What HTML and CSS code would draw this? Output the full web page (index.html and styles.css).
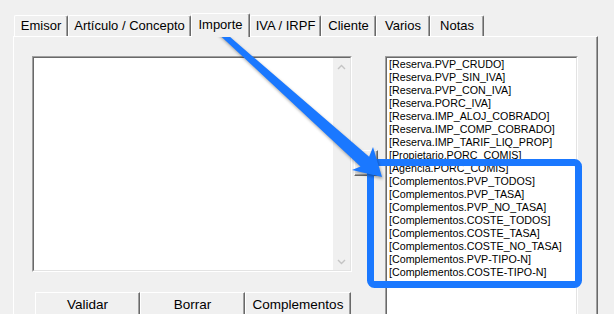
FILE: index.html
```html
<!DOCTYPE html>
<html>
<head>
<meta charset="utf-8">
<link rel="stylesheet" href="styles.css">
</head>
<body>
<div class="window">
  <div class="tabs">
    <div class="tab w-emisor">Emisor</div>
    <div class="tab w-articulo">Artículo / Concepto</div>
    <div class="tab tab-active w-importe">Importe</div>
    <div class="tab w-iva">IVA / IRPF</div>
    <div class="tab w-cliente">Cliente</div>
    <div class="tab w-varios">Varios</div>
    <div class="tab w-notas">Notas</div>
  </div>
  <div class="panel">
    <div class="left-col">
      <div class="memo">
        <div class="memo-inner">
          <div class="memo-text"></div>
          <div class="vscroll">
            <div class="sb-btn">
              <svg class="chev" width="9" height="6" viewBox="0 0 9 6"><polyline points="1,5 4.5,1.5 8,5" fill="none" stroke="#c4c4c4" stroke-width="1.4"/></svg>
            </div>
            <div class="sb-btn">
              <svg class="chev" width="9" height="6" viewBox="0 0 9 6"><polyline points="1,1 4.5,4.5 8,1" fill="none" stroke="#c4c4c4" stroke-width="1.4"/></svg>
            </div>
          </div>
        </div>
      </div>
      <div class="buttons">
        <div class="btn b-validar">Validar</div>
        <div class="btn b-borrar">Borrar</div>
        <div class="btn b-compl">Complementos</div>
      </div>
    </div>
    <div class="mid">
      <div class="small-btn"></div>
    </div>
    <div class="list">
      <div class="list-inner">
        <div class="item">[Reserva.PVP_CRUDO]</div>
        <div class="item">[Reserva.PVP_SIN_IVA]</div>
        <div class="item">[Reserva.PVP_CON_IVA]</div>
        <div class="item">[Reserva.PORC_IVA]</div>
        <div class="item">[Reserva.IMP_ALOJ_COBRADO]</div>
        <div class="item">[Reserva.IMP_COMP_COBRADO]</div>
        <div class="item">[Reserva.IMP_TARIF_LIQ_PROP]</div>
        <div class="item">[Propietario.PORC_COMIS]</div>
        <div class="item">[Agencia.PORC_COMIS]</div>
        <div class="item">[Complementos.PVP_TODOS]</div>
        <div class="item">[Complementos.PVP_TASA]</div>
        <div class="item">[Complementos.PVP_NO_TASA]</div>
        <div class="item">[Complementos.COSTE_TODOS]</div>
        <div class="item">[Complementos.COSTE_TASA]</div>
        <div class="item">[Complementos.COSTE_NO_TASA]</div>
        <div class="item">[Complementos.PVP-TIPO-N]</div>
        <div class="item">[Complementos.COSTE-TIPO-N]</div>
      </div>
    </div>
  </div>
</div>
<svg class="annot" width="614" height="314" viewBox="0 0 614 314">
  <rect x="370.5" y="162.5" width="208" height="122" rx="4" fill="none" stroke="#1a78ff" stroke-width="7"/>
  <polygon class="arrow" points="216.3,31.9 219.7,28.1 369.1,156.8 373,147 382,177 352,170 360.5,166.4" fill="#1a78ff"/>
</svg>
</body>
</html>
```

FILE: styles.css
```css
html, body {
  margin: 0;
  padding: 0;
}
body {
  background: #f0f0f0;
  font-family: "Liberation Sans", Arial, sans-serif;
  color: #000;
  width: 614px;
  height: 314px;
  overflow: hidden;
  position: relative;
}
.window {
  padding: 13px 0 0 13px;
}
.tabs {
  display: flex;
  align-items: flex-start;
  height: 23px;
  padding-left: 1px;
}
.tab {
  box-sizing: border-box;
  height: 21px;
  margin-top: 2px;
  border-top: 1px solid #fff;
  border-left: 1px solid #fff;
  border-right: 1px solid #696969;
  box-shadow: inset -1px 0 #a0a0a0;
  border-radius: 2px 2px 0 0;
  font-size: 13px;
  line-height: 19px;
  text-align: center;
  white-space: nowrap;
  background: #f0f0f0;
}
.tab-active {
  height: 24px;
  margin-top: 0;
  line-height: 22px;
  position: relative;
  z-index: 2;
}
.w-emisor { width: 54px; }
.w-articulo { width: 123px; }
.w-importe { width: 59px; }
.w-iva { width: 71px; }
.w-cliente { width: 55px; }
.w-varios { width: 54px; }
.w-notas { width: 54px; }

.panel {
  box-sizing: border-box;
  width: 585px;
  height: 278px;
  overflow: hidden;
  border-top: 1px solid #fff;
  border-left: 1px solid #fff;
  border-right: 1px solid #696969;
  box-shadow: inset -1px 0 #a0a0a0;
  display: flex;
  align-items: flex-start;
  padding: 19px 0 0 18px;
}
.left-col {
  width: 320px;
  display: flex;
  flex-direction: column;
}
.memo {
  box-sizing: border-box;
  height: 216px;
  border-top: 1px solid #a0a0a0;
  border-left: 1px solid #a0a0a0;
  border-right: 1px solid #fff;
  border-bottom: 1px solid #fff;
}
.memo-inner {
  box-sizing: border-box;
  height: 100%;
  border-top: 1px solid #696969;
  border-left: 1px solid #696969;
  border-right: 1px solid #e3e3e3;
  border-bottom: 1px solid #e3e3e3;
  display: flex;
  background: #fff;
}
.memo-text {
  flex: 1;
}
.vscroll {
  width: 17px;
  background: #f0f0f0;
  display: flex;
  flex-direction: column;
  justify-content: space-between;
}
.sb-btn {
  height: 17px;
  display: flex;
  align-items: center;
  justify-content: center;
}
.chev {
  display: block;
}
.buttons {
  display: flex;
  margin: 20px 0 0 3px;
}
.btn {
  box-sizing: border-box;
  height: 25px;
  border-top: 1px solid #fff;
  border-left: 1px solid #fff;
  border-right: 1px solid #696969;
  border-bottom: 1px solid #696969;
  box-shadow: inset -1px -1px #a0a0a0;
  font-size: 13.5px;
  line-height: 23px;
  text-align: center;
  white-space: nowrap;
}
.b-validar { width: 105px; }
.b-borrar { width: 105px; }
.b-compl { width: 106px; }

.mid {
  width: 33px;
  box-sizing: border-box;
  padding: 94px 0 0 2px;
}
.small-btn {
  box-sizing: border-box;
  width: 24px;
  height: 26px;
  border-top: 1px solid #fff;
  border-left: 1px solid #fff;
  border-right: 1px solid #696969;
  border-bottom: 1px solid #696969;
  box-shadow: inset -1px -1px #a0a0a0;
}
.list {
  box-sizing: border-box;
  width: 193px;
  height: 270px;
  border-top: 1px solid #a0a0a0;
  border-left: 1px solid #a0a0a0;
  border-right: 1px solid #fff;
}
.list-inner {
  box-sizing: border-box;
  height: 100%;
  border-top: 1px solid #696969;
  border-left: 1px solid #696969;
  border-right: 1px solid #e3e3e3;
  background: #fff;
  padding-left: 2px;
}
.item {
  font-size: 10.7px;
  line-height: 13px;
  height: 13px;
  white-space: nowrap;
}
.annot {
  position: absolute;
  left: 0;
  top: 0;
  pointer-events: none;
}
.arrow {
  filter: drop-shadow(1px 2px 1.5px rgba(0, 0, 0, 0.35));
}
```
